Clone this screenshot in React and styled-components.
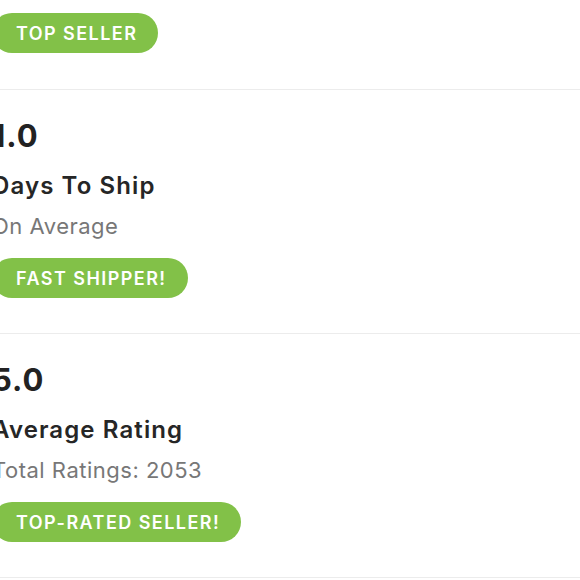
import React from "react";
import styled, { createGlobalStyle } from "styled-components";

const Global = createGlobalStyle`
  html, body { margin: 0; padding: 0; background: #ffffff; }
  body { font-family: Inter, "Liberation Sans", sans-serif; overflow: hidden; }
`;

const Page = styled.div`
  width: 588px;
  margin-left: -8px;
  display: flex;
  flex-direction: column;
`;

const Section = styled.section`
  display: flex;
  flex-direction: column;
  align-items: flex-start;
  padding: ${(p) => (p.$first ? "13px 0 36px" : "28px 0 35px")};
  border-bottom: 1px solid #ececec;
`;

const Value = styled.div`
  font-size: 31px;
  line-height: 36px;
  font-weight: 700;
  letter-spacing: 1px;
  color: #222222;
`;

const Title = styled.div`
  margin-top: 17px;
  font-size: 24px;
  line-height: 30px;
  font-weight: 600;
  letter-spacing: 1.1px;
  color: #262626;
`;

const Sub = styled.div`
  margin-top: 11px;
  font-size: 22px;
  line-height: 28px;
  font-weight: 400;
  letter-spacing: 0.5px;
  color: #777777;
`;

const Badge = styled.span`
  display: inline-flex;
  align-items: center;
  height: 40px;
  margin-top: ${(p) => (p.$first ? "0" : "18px")};
  padding: 0 21px 0 24px;
  border-radius: 20px;
  background: #82c148;
  color: #ffffff;
  font-size: 18px;
  font-weight: 600;
  letter-spacing: 1.45px;
  text-transform: uppercase;
  white-space: nowrap;
`;

const stats = [
  { value: "1.0", title: "Days To Ship", sub: "On Average", badge: "Fast Shipper!" },
  { value: "5.0", title: "Average Rating", sub: "Total Ratings: 2053", badge: "Top-Rated Seller!" },
];

export default function App() {
  return (
    <>
      <Global />
      <Page>
        <Section $first>
          <Badge $first>Top Seller</Badge>
        </Section>
        {stats.map((s) => (
          <Section key={s.title}>
            <Value>{s.value}</Value>
            <Title>{s.title}</Title>
            <Sub>{s.sub}</Sub>
            <Badge>{s.badge}</Badge>
          </Section>
        ))}
      </Page>
    </>
  );
}
